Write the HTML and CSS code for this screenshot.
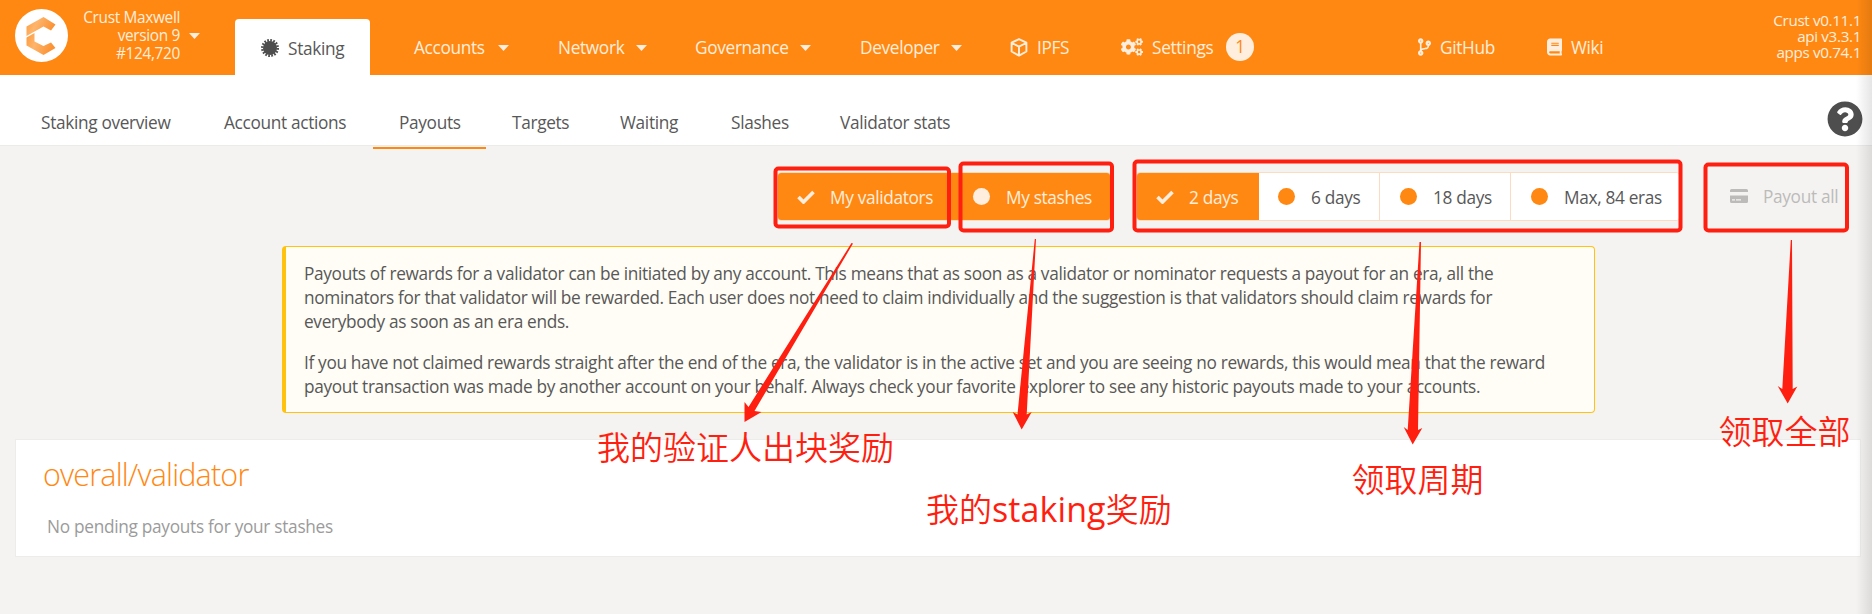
FILE: index.html
```html
<!DOCTYPE html>
<html lang="en">
<head>
<meta charset="utf-8">
<title>Staking - Payouts</title>
<link rel="stylesheet" href="styles.css">
</head>
<body>
<header class="topbar">
  <div class="chain">
    <svg class="logo" viewBox="0 0 53 53">
      <defs>
        <linearGradient id="lg" x1="0" y1="0" x2="1" y2="0.3"><stop offset="0" stop-color="#ff9a3a"/><stop offset=".4" stop-color="#fdb56c"/><stop offset="1" stop-color="#fb9233"/></linearGradient>
      </defs>
      <circle cx="26.5" cy="26.5" r="26.5" fill="#fff"/>
      <path d="M11.500 17.500 28.500 8 40.500 15.500 36 21.500 28.500 17.500 11.500 27Z" fill="url(#lg)"/>
      <path d="M11.500 28.500 19.500 24V32.500L28.500 37 36 33.500 40.500 39 28.500 46 11.500 36.500Z" fill="url(#lg)"/>
    </svg>
    <div class="chain-info"><div>Crust Maxwell</div><div>version 9</div><div>#124,720</div></div>
    <i class="caret"></i>
  </div>
  <nav class="menu">
    <a class="item active"><svg class="ico cert" viewBox="0 0 18 18"><circle cx="9" cy="9" r="7" fill="#4e4e4e"/><circle cx="9" cy="9" r="7.700" fill="none" stroke="#4e4e4e" stroke-width="2.600" stroke-dasharray="1.700 1.324"/></svg><span>Staking</span></a>
    <a class="item accounts"><span>Accounts</span><i class="caret"></i></a>
    <a class="item network"><span>Network</span><i class="caret"></i></a>
    <a class="item governance"><span>Governance</span><i class="caret"></i></a>
    <a class="item developer"><span>Developer</span><i class="caret"></i></a>
    <a class="item ipfs"><svg class="ico cube" viewBox="0 0 18 19"><path d="M9 1.200 16.400 4.700V13.500L9 17.600 1.600 13.500V4.700ZM2 5 9 8.600 16 5M9 8.600V17.500" fill="none" stroke="#ffeede" stroke-width="1.900" stroke-linejoin="round"/></svg><span>IPFS</span></a>
    <a class="item settings"><svg class="ico cogs" viewBox="0 0 640 512"><path fill="#ffeede" d="M512.100 191l-8.200 14.300c-3 5.300-9.400 7.500-15.100 5.400-11.800-4.400-22.600-10.700-32.100-18.600-4.600-3.800-5.800-10.500-2.800-15.700l8.200-14.300c-6.900-8-12.300-17.300-15.900-27.400h-16.500c-6 0-11.200-4.300-12.200-10.300-2-12-2.100-24.600 0-37.100 1-6 6.200-10.400 12.200-10.400h16.500c3.600-10.100 9-19.400 15.900-27.400l-8.200-14.300c-3-5.200-1.900-11.900 2.800-15.700 9.500-7.900 20.400-14.200 32.100-18.600 5.700-2.100 12.100.1 15.100 5.400l8.200 14.300c10.500-1.900 21.200-1.900 31.700 0L552 6.300c3-5.300 9.400-7.500 15.100-5.400 11.800 4.400 22.600 10.700 32.100 18.600 4.600 3.800 5.800 10.500 2.800 15.700l-8.200 14.300c6.900 8 12.300 17.300 15.900 27.400h16.500c6 0 11.200 4.300 12.200 10.300 2 12 2.100 24.600 0 37.100-1 6-6.200 10.400-12.200 10.400h-16.500c-3.600 10.100-9 19.400-15.900 27.400l8.200 14.300c3 5.200 1.900 11.900-2.800 15.700-9.500 7.900-20.400 14.200-32.100 18.600-5.700 2.100-12.100-.1-15.100-5.400l-8.200-14.300c-10.400 1.900-21.200 1.900-31.700 0zm-10.500-58.800c38.500 29.600 82.400-14.300 52.800-52.800-38.500-29.700-82.400 14.300-52.800 52.800zM386.300 286.100l33.700 16.800c10.100 5.800 14.500 18.100 10.500 29.100-8.900 24.200-26.400 46.400-42.600 65.800-7.400 8.900-20.200 11.100-30.300 5.300l-29.100-16.800c-16 13.700-34.600 24.600-54.900 31.700v33.600c0 11.600-8.300 21.600-19.700 23.600-24.600 4.200-50.400 4.400-75.900 0-11.500-2-20-11.900-20-23.600V418c-20.300-7.200-38.900-18-54.900-31.700L74 403c-10 5.800-22.900 3.600-30.300-5.300-16.200-19.400-33.300-41.600-42.200-65.700-4-10.900.4-23.200 10.500-29.100l33.300-16.800c-3.900-20.900-3.900-42.400 0-63.400L12 205.800c-10.100-5.800-14.600-18.100-10.500-29 8.900-24.200 26-46.400 42.200-65.800 7.400-8.900 20.200-11.100 30.300-5.300l29.100 16.800c16-13.700 34.600-24.600 54.900-31.700V57.100c0-11.500 8.200-21.500 19.600-23.500 24.600-4.200 50.500-4.400 76-.1 11.500 2 20 11.900 20 23.600v33.600c20.300 7.200 38.900 18 54.900 31.700l29.100-16.800c10-5.800 22.900-3.600 30.300 5.300 16.200 19.400 33.200 41.600 42.100 65.800 4 10.900.1 23.200-10 29.100l-33.700 16.800c3.900 21 3.900 42.500 0 63.500zm-117.600 21.100c59.200-77-28.700-164.900-105.700-105.700-59.200 77 28.700 164.900 105.700 105.700zm243.400 182.700l-8.200 14.300c-3 5.300-9.400 7.500-15.100 5.400-11.800-4.400-22.600-10.700-32.100-18.600-4.600-3.800-5.800-10.500-2.800-15.700l8.200-14.300c-6.900-8-12.300-17.300-15.900-27.400h-16.500c-6 0-11.200-4.300-12.200-10.300-2-12-2.100-24.600 0-37.100 1-6 6.200-10.400 12.200-10.400h16.500c3.600-10.100 9-19.400 15.900-27.400l-8.200-14.300c-3-5.200-1.900-11.900 2.800-15.700 9.500-7.900 20.400-14.200 32.100-18.600 5.700-2.100 12.100.1 15.100 5.400l8.200 14.300c10.500-1.900 21.200-1.900 31.700 0l8.200-14.300c3-5.300 9.400-7.500 15.100-5.400 11.800 4.400 22.600 10.700 32.100 18.600 4.600 3.800 5.800 10.500 2.800 15.700l-8.200 14.300c6.900 8 12.300 17.300 15.900 27.400h16.500c6 0 11.200 4.300 12.200 10.300 2 12 2.100 24.600 0 37.100-1 6-6.200 10.400-12.200 10.400h-16.500c-3.600 10.100-9 19.400-15.900 27.400l8.200 14.300c3 5.200 1.900 11.900-2.800 15.700-9.500 7.900-20.400 14.200-32.100 18.600-5.700 2.100-12.100-.1-15.100-5.400l-8.200-14.300c-10.400 1.900-21.200 1.900-31.700 0zM501.600 431c38.500 29.600 82.400-14.300 52.800-52.800-38.500-29.600-82.400 14.300-52.800 52.800z"/></svg><span>Settings</span><b class="badge">1</b></a>
    <a class="item github"><svg class="ico branch" viewBox="0 0 384 512"><path fill="#ffeede" d="M384 144c0-44.200-35.800-80-80-80s-80 35.800-80 80c0 36.400 24.300 67.100 57.500 76.800-.6 16.100-4.200 28.500-11 36.900-15.400 19.200-49.300 22.400-85.200 25.700-28.200 2.600-57.400 5.400-81.300 16.900v-144c32.500-10.200 56-40.500 56-76.300 0-44.200-35.800-80-80-80S0 35.800 0 80c0 35.800 23.500 66.100 56 76.300v199.300C23.500 365.900 0 396.200 0 432c0 44.200 35.800 80 80 80s80-35.800 80-80c0-34-21.200-63.100-51.200-74.600 3.100-5.200 7.800-9.800 14.900-13.400 16.200-8.200 40.400-10.400 66.100-12.800 42.200-3.900 90-8.400 118.200-43.400 14-17.400 21.100-39.800 21.600-67.900 31.600-10.800 54.400-40.700 54.400-75.900zM80 64c8.800 0 16 7.200 16 16s-7.200 16-16 16-16-7.200-16-16 7.200-16 16-16zm0 384c-8.800 0-16-7.200-16-16s7.200-16 16-16 16 7.200 16 16-7.200 16-16 16zm224-320c8.800 0 16 7.200 16 16s-7.200 16-16 16-16-7.200-16-16 7.200-16 16-16z"/></svg><span>GitHub</span></a>
    <a class="item wiki"><svg class="ico book" viewBox="0 0 448 512"><path fill="#ffeede" d="M448 360V24c0-13.300-10.700-24-24-24H96C43 0 0 43 0 96v320c0 53 43 96 96 96h328c13.300 0 24-10.700 24-24v-16c0-7.500-3.500-14.300-8.900-18.700-4.200-15.400-4.200-59.300 0-74.700 5.400-4.300 8.900-11.100 8.900-18.600zM128 134c0-3.300 2.700-6 6-6h212c3.300 0 6 2.700 6 6v20c0 3.300-2.700 6-6 6H134c-3.300 0-6-2.700-6-6v-20zm0 64c0-3.300 2.700-6 6-6h212c3.300 0 6 2.700 6 6v20c0 3.300-2.700 6-6 6H134c-3.300 0-6-2.700-6-6v-20zm253.400 250H96c-17.700 0-32-14.300-32-32 0-17.600 14.400-32 32-32h285.400c-1.900 17.100-1.900 46.900 0 64z"/></svg><span>Wiki</span></a>
  </nav>
  <div class="versions"><div>Crust v0.11.1</div><div>api v3.3.1</div><div>apps v0.74.1</div></div>
</header>

<div class="tabs">
  <a class="tab t1">Staking overview</a><a class="tab t2">Account actions</a><a class="tab t3 current">Payouts</a><a class="tab t4">Targets</a><a class="tab t5">Waiting</a><a class="tab t6">Slashes</a><a class="tab t7">Validator stats</a>
  <svg class="help" viewBox="0 0 512 512"><path fill="#4e4e4e" d="M504 256c0 137-111 248-248 248S8 393 8 256C8 119.100 119 8 256 8s248 111.100 248 248zM262.700 90c-54.500 0-89.300 23-116.500 63.800-3.500 5.300-2.400 12.400 2.700 16.300l34.700 26.300c5.200 3.900 12.600 3 16.700-2.100 17.900-22.700 30.100-35.800 57.300-35.800 20.400 0 45.700 13.100 45.700 33 0 15-12.400 22.700-32.500 34C247.100 238.500 216 254.900 216 296v4c0 6.600 5.400 12 12 12h56c6.600 0 12-5.400 12-12v-1.300c0-28.500 83.200-29.600 83.200-106.700 0-58-60.200-102-116.500-102zM256 338c-25.400 0-46 20.600-46 46s20.600 46 46 46 46-20.600 46-46-20.600-46-46-46z"/></svg>
</div>

<main class="content">
  <div class="buttons">
    <div class="group mine">
      <button class="btn on validators"><svg class="check" viewBox="0 0 18 14"><path d="M1.500 7 6.500 12 16.500 2" fill="none" stroke="#ffeede" stroke-width="3.600"/></svg><span>My validators</span></button>
      <button class="btn on stashes"><i class="dot"></i><span>My stashes</span></button>
    </div>
    <div class="group eras">
      <button class="btn on d2"><svg class="check" viewBox="0 0 18 14"><path d="M1.500 7 6.500 12 16.500 2" fill="none" stroke="#ffeede" stroke-width="3.600"/></svg><span>2 days</span></button>
      <button class="btn d6"><i class="dot"></i><span>6 days</span></button>
      <button class="btn d18"><i class="dot"></i><span>18 days</span></button>
      <button class="btn max"><i class="dot"></i><span>Max, 84 eras</span></button>
    </div>
    <button class="btn payout"><svg class="card-ico" viewBox="0 0 18 14"><path fill="#bcbbba" d="M1.500 0h15A1.500 1.500 0 0 1 18 1.500V3H0V1.500A1.500 1.500 0 0 1 1.500 0zM0 6.500h18v6a1.500 1.500 0 0 1-1.500 1.500h-15A1.500 1.500 0 0 1 0 12.500z"/><path d="M2 10.800h3M6 10.800h5" stroke="#f4f3f1" stroke-width="1.200"/></svg><span>Payout all</span></button>
  </div>

  <article class="notice">
    <p><span class="l1">Payouts of rewards for a validator can be initiated by any account. This means that as soon as a validator or nominator requests a payout for an era, all the</span><br><span class="l2">nominators for that validator will be rewarded. Each user does not need to claim individually and the suggestion is that validators should claim rewards for</span><br><span class="l3">everybody as soon as an era ends.</span></p>
    <p><span class="l4">If you have not claimed rewards straight after the end of the era, the validator is in the active set and you are seeing no rewards, this would mean that the reward</span><br><span class="l5">payout transaction was made by another account on your behalf. Always check your favorite explorer to see any historic payouts made to your accounts.</span></p>
  </article>

  <section class="payouts">
    <h1>overall/validator</h1>
    <div class="empty">No pending payouts for your stashes</div>
  </section>
</main>

<svg class="notes" viewBox="0 0 1872 614">
  <g fill="none" stroke="#ff1f10" stroke-width="4">
    <rect x="775.500" y="168.500" width="173.500" height="58" rx="3"/>
    <rect x="960.500" y="163.500" width="151.500" height="67" rx="3"/>
    <rect x="1134.500" y="161.500" width="546" height="69" rx="3"/>
    <rect x="1705.500" y="164.500" width="141.500" height="66" rx="3"/>
  </g>
  <g fill="#ff1f10">
    <path d="M851.500 243 748.500 407 744.500 402V422L761.500 412 754.500 411 853 243.500Z"/>
    <path d="M1034.800 239 1017.500 414.500 1012.700 412 1021.700 429.500 1031.700 412 1026.700 414.500 1036 239Z"/>
    <path d="M1419.500 242 1407.700 430 1403.700 427 1412.700 444.500 1422.300 428 1418 430 1421 242Z"/>
    <path d="M1790.800 240 1782.300 389 1777.700 386 1787.700 403.500 1797.300 386.500 1792.700 389 1792 240Z"/>
  </g>
  <g class="labels">
    <text x="597" y="460">我的验证人出块奖励</text>
    <text x="926" y="522">我的<tspan class="latin">staking</tspan>奖励</text>
    <text x="1351.500" y="492">领取周期</text>
    <text x="1718.500" y="444">领取全部</text>
  </g>
</svg>
<div class="edge"></div>
</body>
</html>
```
FILE: styles.css
```css
* { box-sizing: border-box; }
body {
  margin: 0;
  width: 1872px;
  height: 614px;
  overflow: hidden;
  position: relative;
  background: #f4f3f1;
  color: #585858;
  font: 400 17.25px/24px "Open Sans", "Noto Sans", "Noto Sans CJK SC", sans-serif;
  letter-spacing: -0.33px;
}
span, a, button { white-space: nowrap; }

.topbar { height: 75px; background: #ff8812; color: #ffeede; display: flex; }
.chain { width: 235px; padding: 9px 0 0 15px; display: flex; }
.logo { width: 53px; height: 53px; flex: none; }
.chain-info { width: 112px; text-align: right; font-size: 15.4px; line-height: 18px; }
.caret { flex: none; width: 11px; height: 6px; background: #ffeede; clip-path: polygon(0 0, 100% 0, 50% 100%); }
.chain .caret { margin: 24px 0 0 9px; }

.menu { display: flex; width: 1425px; padding-top: 19px; }
.item { display: flex; align-items: center; height: 56px; flex: none; }
.item span { padding-top: 2px; }
.item.active { width: 135px; padding-left: 26px; padding-top: 2px; background: #fff; color: #585858; border-radius: 4px 4px 0 0; }
.item .ico { flex: none; margin-right: 9px; }
.item .caret { margin-left: auto; margin-top: 2px; }
.cert { width: 18px; height: 18px; }
.accounts { margin-left: 44px; width: 95px; }
.network { margin-left: 49px; width: 89px; }
.governance { margin-left: 48px; width: 116px; }
.developer { margin-left: 49px; width: 102px; }
.ipfs { margin-left: 48px; width: 111px; }
.cube { width: 18px; height: 19px; }
.settings { width: 133px; }
.cogs { width: 22px; height: 18px; }
.badge { width: 28px; height: 28px; margin-left: auto; border-radius: 50%; background: #ffeede; color: #ff8812; font-weight: 400; text-align: center; line-height: 28px; }
.github { margin-left: 164px; width: 129px; }
.branch { width: 13px; height: 18px; }
.wiki { width: 60px; }
.book { width: 15px; height: 18px; }
.versions { width: 201px; padding-top: 12px; text-align: right; font-size: 15.2px; line-height: 16px; }

.tabs { height: 71px; background: #fff; border-bottom: 1px solid #ebebea; display: flex; padding-left: 14px; }
.tab { height: 74px; padding: 36px 0 0 27px; flex: none; }
.t1 { width: 183px; }
.t2 { width: 176px; }
.t3 { width: 113px; padding-left: 26px; }
.t4 { width: 107px; padding-left: 26px; }
.t5 { width: 111px; }
.t6 { width: 109px; }
.t7 { width: 140px; }
.current { border-bottom: 2px solid #ff8812; }
.help { width: 36px; height: 36px; margin: 26px 9px 0 auto; }

.content { padding: 0 11px 0 15px; }
.buttons { display: flex; padding: 26px 0 0 762px; height: 75px; }
.group { display: flex; height: 49px; border: 1px solid #fbdcc0; border-radius: 4px; overflow: hidden; background: #fff; }
.mine { width: 334px; }
.eras { width: 544px; margin-left: 25px; }
.btn { display: flex; align-items: center; height: 47px; margin: 0; padding: 0 0 0 19px; border: 0; background: #fff; color: #585858; font: inherit; letter-spacing: inherit; }
.btn.on { background: #ff8812; color: #ffeede; }
.btn span { padding-top: 2px; }
.check { width: 18px; height: 14px; margin-right: 15px; flex: none; }
.dot { width: 17px; height: 17px; margin-right: 16px; border-radius: 50%; background: #ff8812; flex: none; }
.on .dot { background: #ffeede; }
.validators { width: 176px; }
.stashes { width: 156px; }
.d2 { width: 122px; }
.d6 { width: 120px; }
.d18 { width: 131px; border-left: 1px solid #fbdcc0; padding-left: 20px; }
.max { width: 169px; border-left: 1px solid #fbdcc0; padding-left: 20px; }
.payout { background: none; color: #bcbbba; margin: 0 0 0 31px; }
.card-ico { width: 18px; height: 14px; margin-right: 15px; }

.notice { margin: 25px 0 0 267px; width: 1313px; height: 167px; border: 1px solid #ffc20e; border-left-width: 4px; border-radius: 4px; background: #fffdf5; padding: 15px 0 0 18px; }
.notice p { margin: 0 0 17px; }

.payouts { margin-top: 26px; height: 118px; background: #fff; border: 1px solid #ececea; padding-left: 27px; }
h1 { margin: 0; padding-top: 11px; color: #ff8812; font-size: 30.5px; line-height: 46px; font-weight: 300; letter-spacing: -0.8px; }
.empty { padding: 18px 0 0 4px; color: #9b9b9b; letter-spacing: -0.29px; }

.notes { position: absolute; left: 0; top: 0; width: 1872px; height: 614px; }
.labels { fill: #ff1f10; font-family: "Noto Sans CJK SC", sans-serif; font-size: 33px; font-weight: 350; letter-spacing: 0; }
.latin { font-family: "Open Sans", sans-serif; font-size: 34px; font-weight: 400; letter-spacing: 0.1px; }
.edge { position: absolute; right: 0; top: 0; width: 16px; height: 614px; background: linear-gradient(90deg, rgba(0,0,0,0), rgba(0,0,0,.1)); }
```
